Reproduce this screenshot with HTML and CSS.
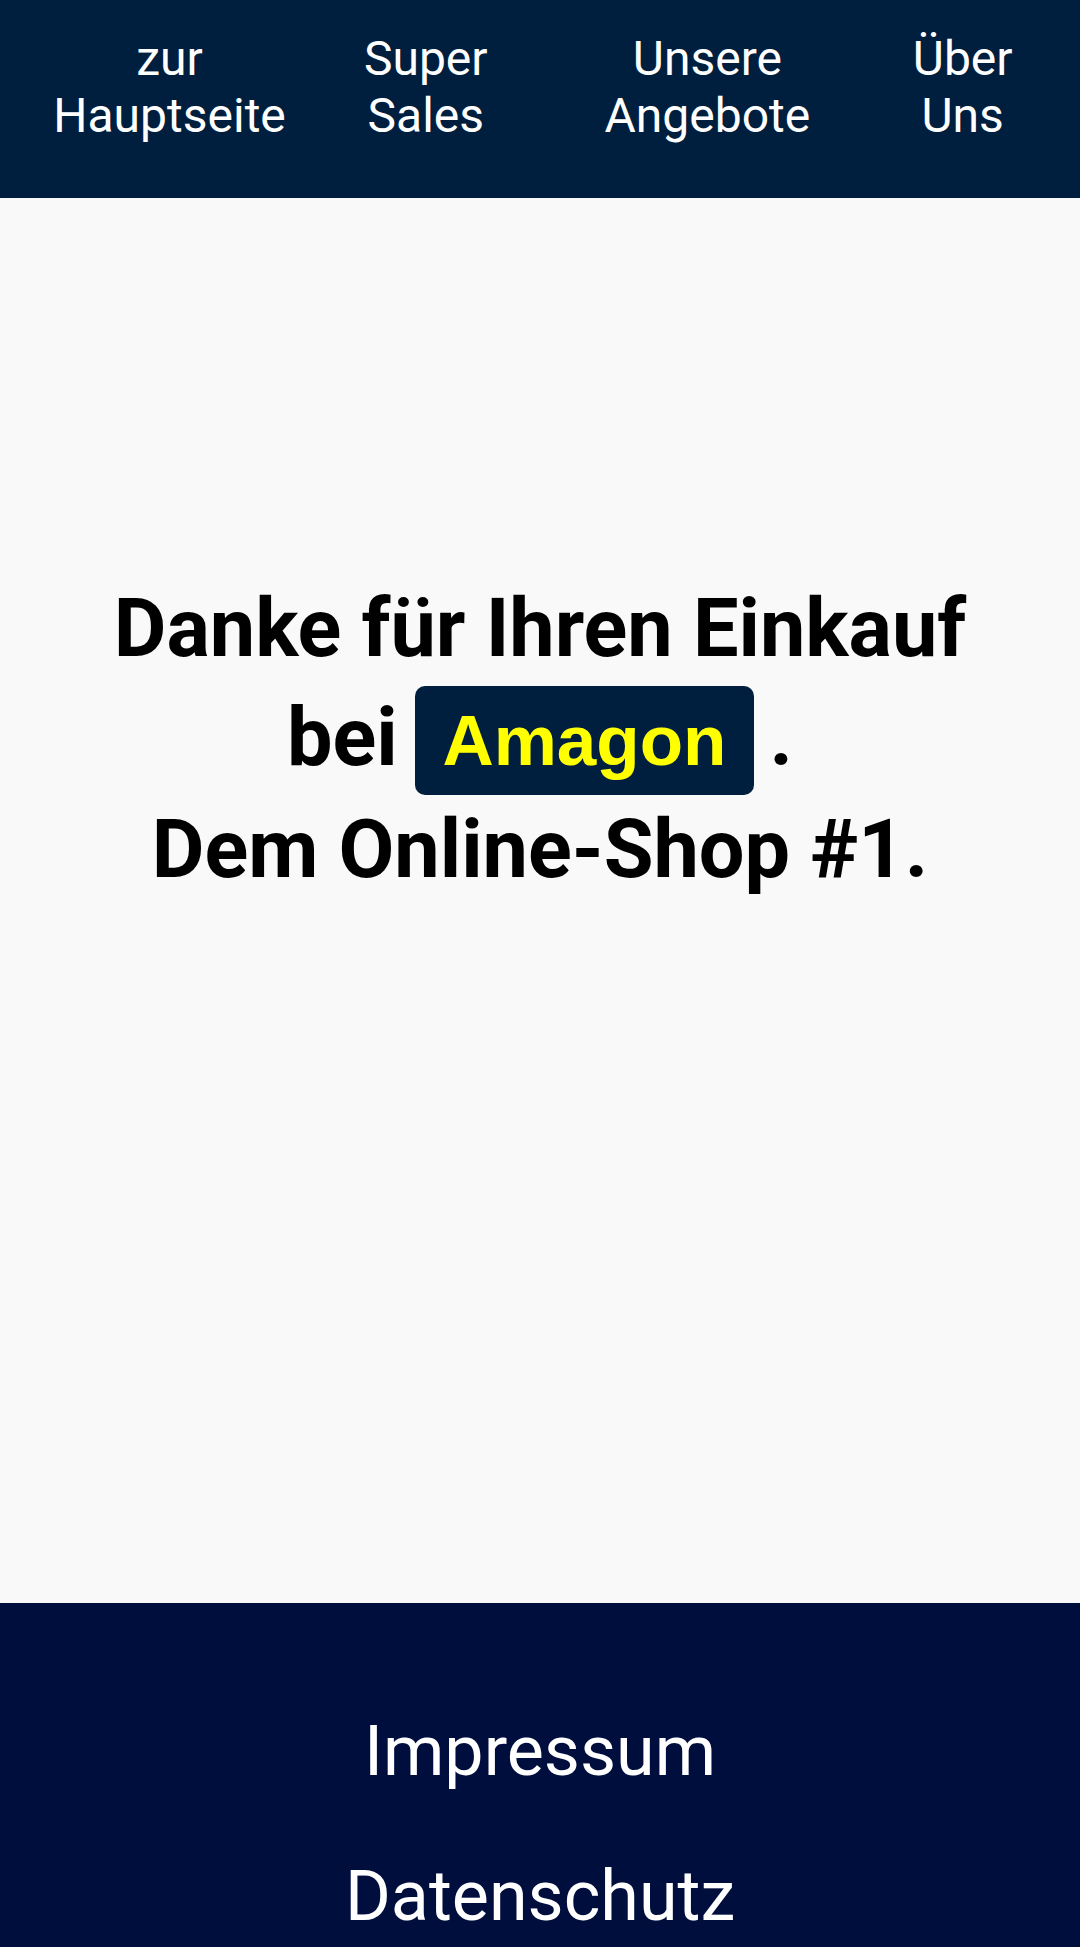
FILE: index.html
```html
<!DOCTYPE html>
<html lang="de">
<head>
<meta charset="utf-8">
<title>Amagon – Danke</title>
<link rel="stylesheet" href="styles.css">
</head>
<body>
<nav class="topnav">
  <ul class="nav-list">
    <li class="nav-item"><a class="nav-link" href="#">zur Hauptseite</a></li>
    <li class="nav-item"><a class="nav-link" href="#">Super Sales</a></li>
    <li class="nav-item"><a class="nav-link" href="#">Unsere Angebote</a></li>
    <li class="nav-item"><a class="nav-link" href="#">Über Uns</a></li>
  </ul>
</nav>
<main class="content">
  <h1 class="thanks">Danke für Ihren Einkauf<br>bei <span class="brand">Amagon</span> .<br>Dem Online-Shop #1.</h1>
</main>
<footer class="site-footer">
  <a class="footer-link" href="#">Impressum</a>
  <a class="footer-link" href="#">Datenschutz</a>
</footer>
</body>
</html>
```
FILE: styles.css
```css
html, body {
  margin: 0;
  padding: 0;
}
body {
  background: #f9f9f9;
  font-family: Roboto, "Liberation Sans", Arial, sans-serif;
  color: #000;
}
.topnav {
  background: #001f3f;
  height: 198px;
  box-sizing: border-box;
  padding: 30px 29px 0 28px;
}
.nav-list {
  list-style: none;
  margin: 0;
  padding: 0;
  display: flex;
  justify-content: space-around;
}
.nav-item {
  flex: 0 1 auto;
  text-align: center;
  font-size: 48px;
  line-height: 57px;
}
.nav-link {
  color: #fff;
  text-decoration: none;
}
.content {
  height: 1405px;
  box-sizing: border-box;
  padding-top: 376px;
}
.thanks {
  margin: 0;
  font-size: 81px;
  font-weight: 700;
  line-height: 109px;
  text-align: center;
}
.brand {
  display: inline-block;
  background: #001f3f;
  color: #ffff00;
  font-family: "Liberation Sans", Arial, sans-serif;
  font-size: 71px;
  font-weight: 700;
  line-height: normal;
  padding: 14px 28px 14px 27px;
  margin: 0 -5px 0 -2.5px;
  border-radius: 10px;
}
.site-footer {
  background: #000e3e;
  display: flex;
  flex-direction: column;
  align-items: center;
  gap: 63px;
  padding: 107px 0 80px;
}
.footer-link {
  color: #fff;
  text-decoration: none;
  font-size: 70px;
  line-height: normal;
}
```
